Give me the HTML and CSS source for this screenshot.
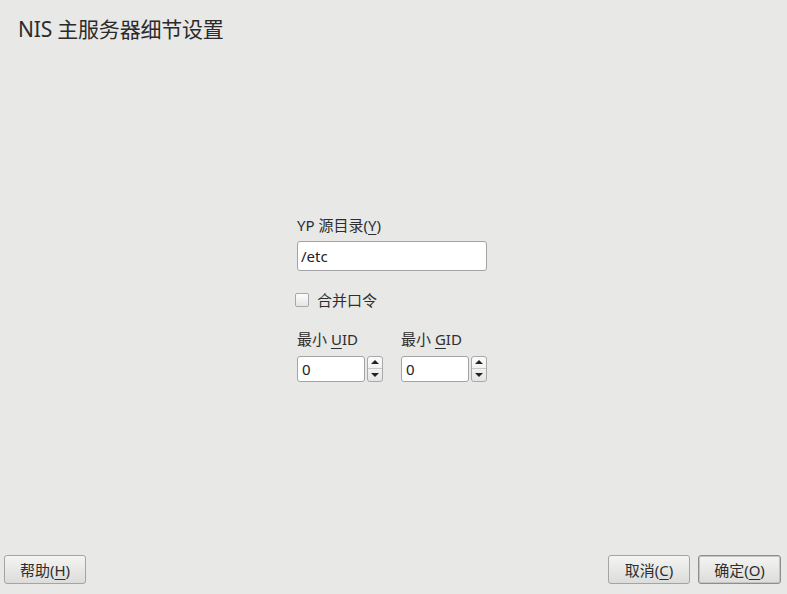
FILE: index.html
```html
<!DOCTYPE html>
<html>

<head>
    <meta charset="UTF-8">
    <title>NIS 主服务器细节设置</title>
    <link rel="stylesheet" href="styles.css">
</head>

<body>
    <div class="page">
        <h1 class="title">NIS 主服务器细节设置</h1>

        <div class="main">
            <div class="form">
                <label class="label">YP 源目录(<u>Y</u>)</label>
                <input class="field" type="text" value="/etc">

                <div class="check-row">
                    <span class="checkbox"></span>
                    <span class="check-text">合并口令</span>
                </div>

                <div class="spin-row">
                    <div class="spin-group">
                        <label class="label">最小 <u>U</u>ID</label>
                        <div class="spin">
                            <input class="spin-field" type="text" value="0">
                            <div class="spin-btns">
                                <span class="arrow up"></span>
                                <span class="arrow down"></span>
                            </div>
                        </div>
                    </div>
                    <div class="spin-group">
                        <label class="label">最小 <u>G</u>ID</label>
                        <div class="spin">
                            <input class="spin-field" type="text" value="0">
                            <div class="spin-btns">
                                <span class="arrow up"></span>
                                <span class="arrow down"></span>
                            </div>
                        </div>
                    </div>
                </div>
            </div>
        </div>

        <div class="footer">
            <button class="btn">帮助(<u>H</u>)</button>
            <div class="btn-group">
                <button class="btn">取消(<u>C</u>)</button>
                <button class="btn default">确定(<u>O</u>)</button>
            </div>
        </div>
    </div>
</body>

</html>
```

FILE: styles.css
```css
body,
h1,
button,
input {
    margin: 0;
    padding: 0;
}

body {
    background: #e8e8e7;
    color: #2e2e2e;
    font-family: "Noto Sans", "Noto Sans CJK SC", sans-serif;
    font-size: 15px;
}

u {
    text-decoration: underline;
    text-underline-offset: 3px;
}

.page {
    display: flex;
    flex-direction: column;
    height: 594px;
}

.title {
    padding: 14px 0 0 18px;
    font-size: 21px;
    font-weight: normal;
    line-height: 30px;
    letter-spacing: -0.2px;
    color: #2b2b2b;
}

.main {
    flex: 1;
    display: flex;
    justify-content: center;
    align-items: center;
    padding: 0 3px 2px 0;
}

.form {
    width: 190px;
    display: flex;
    flex-direction: column;
}

.label {
    display: block;
    font-size: 15px;
    line-height: 18px;
    margin-bottom: 7px;
}

.field {
    box-sizing: border-box;
    width: 190px;
    height: 30px;
    border: 1px solid #a3a3a3;
    border-radius: 3px;
    background: #fff;
    padding: 0 3px;
    font-family: inherit;
    font-size: 15px;
    color: #222;
}

.check-row {
    display: flex;
    align-items: center;
    margin-top: 20px;
    margin-left: -2px;
}

.checkbox {
    box-sizing: border-box;
    width: 14px;
    height: 14px;
    border: 1px solid #a8a8a8;
    border-radius: 2px;
    background: linear-gradient(#fdfdfd, #e4e4e4);
    margin-right: 8px;
}

.check-text {
    line-height: 18px;
}

.spin-row {
    display: flex;
    gap: 18px;
    margin-top: 21px;
}

.spin-row .label {
    margin-bottom: 8px;
}

.spin {
    display: flex;
    align-items: stretch;
    width: 86px;
    height: 26px;
}

.spin-field {
    box-sizing: border-box;
    width: 68px;
    height: 26px;
    border: 1px solid #a3a3a3;
    border-radius: 3px;
    background: #fff;
    padding: 0 4px;
    font-family: inherit;
    font-size: 15px;
    color: #222;
}

.spin-btns {
    box-sizing: border-box;
    width: 16px;
    margin-left: 2px;
    border: 1px solid #a8a8a8;
    border-radius: 3px;
    background: linear-gradient(#fbfbfb, #e6e6e6);
    display: flex;
    flex-direction: column;
}

.arrow {
    flex: 1;
    display: flex;
    justify-content: center;
    align-items: center;
}

.arrow.up {
    border-bottom: 1px solid #c9c9c9;
}

.arrow::after {
    content: "";
    width: 0;
    height: 0;
    border-left: 4px solid transparent;
    border-right: 4px solid transparent;
}

.arrow.up::after {
    border-bottom: 4px solid #222;
}

.arrow.down::after {
    border-top: 4px solid #222;
}

.footer {
    display: flex;
    justify-content: space-between;
    padding: 0 6px 10px 4px;
}

.btn-group {
    display: flex;
    gap: 8px;
}

.btn {
    box-sizing: border-box;
    width: 82px;
    height: 29px;
    border: 1px solid #a4a4a4;
    border-radius: 3px;
    background: linear-gradient(#f4f4f3, #dcdcda);
    font-family: inherit;
    font-size: 15px;
    color: #2e2e2e;
}

.btn.default {
    width: 83px;
    border-color: #8e8e8e;
    box-shadow: inset 0 0 0 1px #c4c4c4;
}
```
